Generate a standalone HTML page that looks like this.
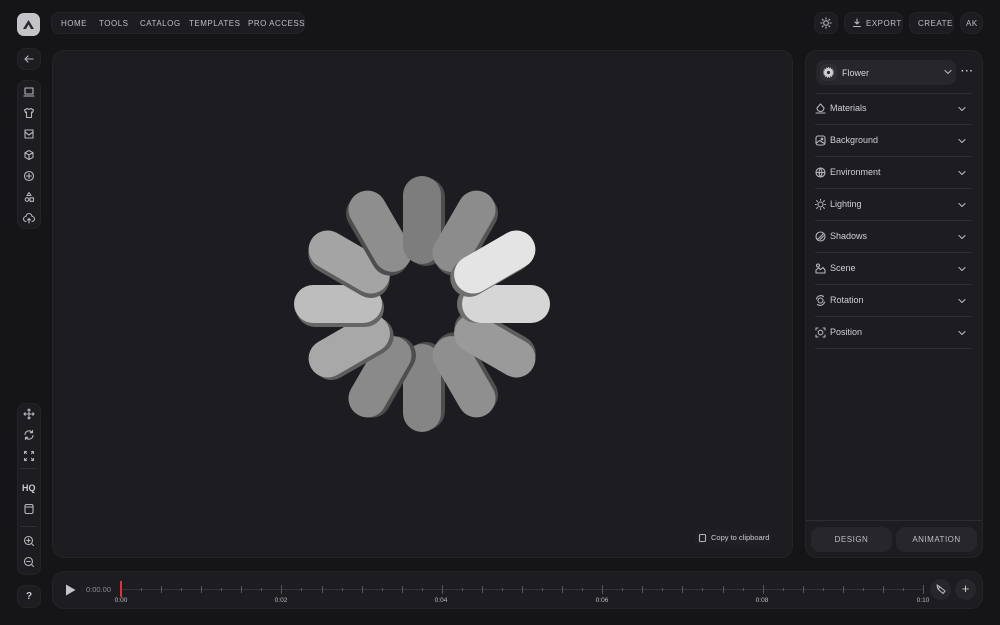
<!DOCTYPE html>
<html><head><meta charset="utf-8"><style>
*{margin:0;padding:0;box-sizing:border-box}
body{width:1000px;height:625px;background:#151518;font-family:"Liberation Sans",sans-serif;color:#c9c9ce;position:relative;overflow:hidden}
.a{position:absolute}
.box{background:#1d1d21;border:1px solid #232328}
.nav{font-size:8px;letter-spacing:.5px;color:#bfbfc4;white-space:nowrap}
.ic{position:absolute;left:22px;width:14px;height:14px}
svg.s{stroke:#b5b5ba;fill:none;stroke-width:1.1;stroke-linecap:round;stroke-linejoin:round}
.row{position:absolute;left:815px;width:157px;height:32px;border-bottom:1px solid #2c2c31;font-size:9px;color:#cfcfd4}
.row span{position:absolute;left:15px;top:10px}
.row svg{position:absolute}
.row .ch{right:6px;top:13px}
.tk{position:absolute;width:1px;background:#55555b}
.tl{position:absolute;top:597px;font-size:6.5px;color:#bbb;transform:translateX(-50%)}
</style></head><body>
<div class="a" style="left:17px;top:13px;width:23px;height:23px;border-radius:7px;background:#c4c4c8"></div>
<svg class="a" style="left:21px;top:17px" width="15" height="15" viewBox="0 0 15 15"><path d="M2 12 L7.5 3 L13 12 L10 12 L7.5 7.5 L5 12Z" fill="#2a2a2e"/></svg>
<div class="a box nav" style="left:51px;top:12px;width:254px;height:22px;border-radius:8px;">
<span class="a" style="left:9px;top:6px">HOME</span><span class="a" style="left:47px;top:6px">TOOLS</span><span class="a" style="left:88px;top:6px">CATALOG</span><span class="a" style="left:137px;top:6px">TEMPLATES</span><span class="a" style="left:196px;top:6px">PRO ACCESS</span></div>
<div class="a box" style="left:814px;top:12px;width:24px;height:22px;border-radius:8px"></div>
<svg class="a s" style="left:820px;top:17px" width="12" height="12" viewBox="0 0 12 12"><circle cx="6" cy="6" r="2.3"/><path d="M6 .8v1.3M6 9.9v1.3M.8 6h1.3M9.9 6h1.3M2.3 2.3l.9.9M8.8 8.8l.9.9M2.3 9.7l.9-.9M8.8 3.2l.9-.9"/></svg>
<div class="a box nav" style="left:844px;top:12px;width:59px;height:22px;border-radius:8px"><svg class="a s" style="left:7px;top:5px" width="10" height="10" viewBox="0 0 10 10"><path d="M5 1v5M3 4l2 2 2-2M1.5 8.5h7"/></svg><span class="a" style="left:21px;top:6px">EXPORT</span></div>
<div class="a box nav" style="left:909px;top:12px;width:45px;height:22px;border-radius:8px"><span class="a" style="left:8px;top:6px">CREATE</span></div>
<div class="a box nav" style="left:960px;top:12px;width:23px;height:22px;border-radius:10px"><span class="a" style="left:5px;top:6px">AK</span></div>
<div class="a box" style="left:17px;top:48px;width:24px;height:22px;border-radius:8px"></div>
<svg class="a s" style="left:23px;top:53px" width="12" height="12" viewBox="0 0 12 12"><path d="M10 6H2M5 3L2 6l3 3"/></svg>
<div class="a box" style="left:17px;top:80px;width:24px;height:149px;border-radius:8px"></div>
<svg class="ic s" style="top:85px" viewBox="0 0 14 14"><rect x="3" y="3" width="8" height="6"/><path d="M2 11h10"/></svg>
<svg class="ic s" style="top:106px" viewBox="0 0 14 14"><path d="M5 2.5L2.5 4 3.5 6.5 4.5 6V11.5h5V6l1 .5 1-2.5L9 2.5Q7 4 5 2.5Z"/></svg>
<svg class="ic s" style="top:127px" viewBox="0 0 14 14"><rect x="3" y="3" width="8" height="8"/><path d="M3 5l4 3 4-3"/></svg>
<svg class="ic s" style="top:148px" viewBox="0 0 14 14"><path d="M7 2.5l4 2.2v4.6L7 11.5 3 9.3V4.7ZM3 4.7l4 2.3 4-2.3M7 7v4.5"/></svg>
<svg class="ic s" style="top:169px" viewBox="0 0 14 14"><circle cx="7" cy="7" r="4.5"/><path d="M7 4.5v5M4.5 7h5"/></svg>
<svg class="ic s" style="top:190px" viewBox="0 0 14 14"><path d="M7 2.5l2 3H5Z"/><circle cx="5" cy="9.5" r="1.8"/><rect x="8" y="7.8" width="3.5" height="3.5"/></svg>
<svg class="ic s" style="top:211px" viewBox="0 0 14 14"><path d="M4 10.5a2.5 2.5 0 0 1 0-5 3 3 0 0 1 6 0 2.5 2.5 0 0 1 0 5M7 12V7.5M5.5 9L7 7.5 8.5 9"/></svg>
<div class="a box" style="left:17px;top:403px;width:24px;height:172px;border-radius:8px"></div>
<svg class="ic s" style="top:407px" viewBox="0 0 14 14"><path d="M7 2v10M2 7h10M5.8 3.2L7 2l1.2 1.2M5.8 10.8L7 12l1.2-1.2M3.2 5.8L2 7l1.2 1.2M10.8 5.8L12 7l-1.2 1.2"/></svg>
<svg class="ic s" style="top:428px" viewBox="0 0 14 14"><path d="M3 6.5a4 4 0 0 1 7.2-2M11 7.5a4 4 0 0 1-7.2 2M10.5 2.5v2.2H8.3M3.5 11.5V9.3h2.2"/></svg>
<svg class="ic s" style="top:449px" viewBox="0 0 14 14"><path d="M2.5 4.5v-2h2M9.5 2.5h2v2M11.5 9.5v2h-2M4.5 11.5h-2v-2M2.5 2.5l2 2M11.5 2.5l-2 2M11.5 11.5l-2-2M2.5 11.5l2-2"/></svg>
<div class="a" style="left:21px;top:468px;width:16px;height:1px;background:#2e2e33"></div>
<div class="a" style="left:22px;top:483px;font-size:9px;font-weight:bold;color:#c9c9ce">HQ</div>
<svg class="ic s" style="top:502px" viewBox="0 0 14 14"><rect x="3" y="2.5" width="8" height="9" rx="1.5"/><path d="M3 5h8"/></svg>
<div class="a" style="left:21px;top:526px;width:16px;height:1px;background:#2e2e33"></div>
<svg class="ic s" style="top:534px" viewBox="0 0 14 14"><circle cx="6.5" cy="6.5" r="4"/><path d="M9.5 9.5l2 2M6.5 4.8v3.4M4.8 6.5h3.4"/></svg>
<svg class="ic s" style="top:555px" viewBox="0 0 14 14"><circle cx="6.5" cy="6.5" r="4"/><path d="M9.5 9.5l2 2M4.8 6.5h3.4"/></svg>
<div class="a box" style="left:17px;top:585px;width:24px;height:23px;border-radius:8px;font-size:10px;font-weight:bold;text-align:center;line-height:21px">?</div>
<div class="a box" style="left:52px;top:50px;width:741px;height:508px;border-radius:12px;background:#1d1d21"></div>
<div class="a" style="left:694px;top:530px;width:78px;height:15px;border-radius:6px;background:#202024;font-size:7.5px;color:#c9c9ce"><svg class="a s" style="left:4px;top:3px" width="9" height="9" viewBox="0 0 9 9"><rect x="1.5" y="1.5" width="6" height="7" rx="1"/></svg><span class="a" style="left:17px;top:3px">Copy to clipboard</span></div>
<svg class="a" style="left:272px;top:154px" width="300" height="300" viewBox="-150 -150 300 300">
<g transform="rotate(180)"><rect x="-19" y="-128" width="38" height="88" rx="19" fill="#4e4e4e" transform="translate(-4,2)"/><rect x="-19" y="-128" width="38" height="88" rx="19" fill="#858585"/></g>
<g transform="rotate(210)"><rect x="-19" y="-128" width="38" height="88" rx="19" fill="#4e4e4e" transform="translate(-4,2)"/><rect x="-19" y="-128" width="38" height="88" rx="19" fill="#8a8a8a"/></g>
<g transform="rotate(150)"><rect x="-19" y="-128" width="38" height="88" rx="19" fill="#4e4e4e" transform="translate(-4,2)"/><rect x="-19" y="-128" width="38" height="88" rx="19" fill="#8f8f8f"/></g>
<g transform="rotate(240)"><rect x="-19" y="-128" width="38" height="88" rx="19" fill="#5e5e5e" transform="translate(-4,2)"/><rect x="-19" y="-128" width="38" height="88" rx="19" fill="#a8a8a8"/></g>
<g transform="rotate(120)"><rect x="-19" y="-128" width="38" height="88" rx="19" fill="#5e5e5e" transform="translate(-4,2)"/><rect x="-19" y="-128" width="38" height="88" rx="19" fill="#9a9a9a"/></g>
<g transform="rotate(270)"><rect x="-19" y="-128" width="38" height="88" rx="19" fill="#666" transform="translate(-4,2)"/><rect x="-19" y="-128" width="38" height="88" rx="19" fill="#bdbdbd"/></g>
<g transform="rotate(300)"><rect x="-19" y="-128" width="38" height="88" rx="19" fill="#5e5e5e" transform="translate(-4,2)"/><rect x="-19" y="-128" width="38" height="88" rx="19" fill="#a4a4a4"/></g>
<g transform="rotate(330)"><rect x="-19" y="-128" width="38" height="88" rx="19" fill="#4e4e4e" transform="translate(-4,2)"/><rect x="-19" y="-128" width="38" height="88" rx="19" fill="#8e8e8e"/></g>
<g transform="rotate(0)"><rect x="-19" y="-128" width="38" height="88" rx="19" fill="#4e4e4e" transform="translate(4,2)"/><rect x="-19" y="-128" width="38" height="88" rx="19" fill="#7d7d7d"/></g>
<g transform="rotate(30)"><rect x="-19" y="-128" width="38" height="88" rx="19" fill="#555" transform="translate(4,2)"/><rect x="-19" y="-128" width="38" height="88" rx="19" fill="#8c8c8c"/></g>
<g transform="rotate(90)"><rect x="-19" y="-128" width="38" height="88" rx="19" fill="#707070" transform="translate(0,5)"/><rect x="-19" y="-128" width="38" height="88" rx="19" fill="#d6d6d6"/></g>
<g transform="rotate(60)"><rect x="-19" y="-128" width="38" height="88" rx="19" fill="#707070" transform="translate(1,5)"/><rect x="-19" y="-128" width="38" height="88" rx="19" fill="#e4e4e4"/></g>
</svg>
<div class="a box" style="left:805px;top:50px;width:178px;height:508px;border-radius:12px"></div>
<div class="a" style="left:816px;top:60px;width:140px;height:25px;border-radius:8px;background:#26262b"></div>
<div class="a" style="left:820px;top:64px;width:17px;height:17px;border-radius:5px;background:#2e2e33"></div>
<svg class="a" style="left:823px;top:67px" width="11" height="11" viewBox="0 0 11 11"><circle cx="5.5" cy="5.5" r="4.5" fill="#d0d0d0"/><circle cx="5.5" cy="5.5" r="4.8" fill="none" stroke="#d0d0d0" stroke-width="1.2" stroke-dasharray="1 1"/><circle cx="5.5" cy="5.5" r="1.6" fill="#2e2e33"/></svg>
<div class="a" style="left:842px;top:68px;font-size:9px;color:#d4d4d8">Flower</div>
<svg class="a s" style="left:944px;top:69px" width="8" height="6" viewBox="0 0 8 6"><path d="M1 1.5l3 3 3-3"/></svg>
<div class="a" style="left:961px;top:66px;font-size:10px;font-weight:bold;letter-spacing:1px;color:#ccc">···</div>
<div class="a" style="left:815px;top:93px;width:157px;height:1px;background:#2c2c31"></div>
<div class="row" style="top:93px"><svg class="s" style="left:0;top:10px" width="11" height="11" viewBox="0 0 11 11"><path d="M5.5 1L9 5a3.5 3.5 0 0 1-7 0ZM1 10h9"/></svg><span>Materials</span><svg class="s ch" width="8" height="6" viewBox="0 0 8 6"><path d="M1 1.5l3 3 3-3"/></svg></div>
<div class="row" style="top:125px"><svg class="s" style="left:0;top:10px" width="11" height="11" viewBox="0 0 11 11"><rect x="1" y="1" width="9" height="9" rx="2"/><path d="M1.5 8l3-2.5 5 3"/><circle cx="7" cy="4" r=".8"/></svg><span>Background</span><svg class="s ch" width="8" height="6" viewBox="0 0 8 6"><path d="M1 1.5l3 3 3-3"/></svg></div>
<div class="row" style="top:157px"><svg class="s" style="left:0;top:10px" width="11" height="11" viewBox="0 0 11 11"><circle cx="5.5" cy="5.5" r="4.5"/><path d="M1 5.5h9M5.5 1c-2 3-2 6 0 9M5.5 1c2 3 2 6 0 9"/></svg><span>Environment</span><svg class="s ch" width="8" height="6" viewBox="0 0 8 6"><path d="M1 1.5l3 3 3-3"/></svg></div>
<div class="row" style="top:189px"><svg class="s" style="left:0;top:10px" width="11" height="11" viewBox="0 0 11 11"><circle cx="5.5" cy="5.5" r="2.5"/><path d="M5.5 0v1.3M5.5 9.7V11M0 5.5h1.3M9.7 5.5H11M1.6 1.6l.9.9M8.5 8.5l.9.9M1.6 9.4l.9-.9M8.5 2.5l.9-.9"/></svg><span>Lighting</span><svg class="s ch" width="8" height="6" viewBox="0 0 8 6"><path d="M1 1.5l3 3 3-3"/></svg></div>
<div class="row" style="top:221px"><svg class="s" style="left:0;top:10px" width="11" height="11" viewBox="0 0 11 11"><circle cx="5.5" cy="5.5" r="4.5"/><path d="M3 8l5-5M5 8.5l3.5-3.5"/></svg><span>Shadows</span><svg class="s ch" width="8" height="6" viewBox="0 0 8 6"><path d="M1 1.5l3 3 3-3"/></svg></div>
<div class="row" style="top:253px"><svg class="s" style="left:0;top:10px" width="11" height="11" viewBox="0 0 11 11"><circle cx="3" cy="2.5" r="1.5"/><path d="M1 10V7l2.5-2 2 1.5L8 4.5 10 7v3Z"/></svg><span>Scene</span><svg class="s ch" width="8" height="6" viewBox="0 0 8 6"><path d="M1 1.5l3 3 3-3"/></svg></div>
<div class="row" style="top:285px"><svg class="s" style="left:0;top:10px" width="11" height="11" viewBox="0 0 11 11"><circle cx="5.5" cy="5.5" r="2.5"/><path d="M1.5 4a4.5 4.5 0 0 1 7-2.5M9.5 7a4.5 4.5 0 0 1-7 2.5"/></svg><span>Rotation</span><svg class="s ch" width="8" height="6" viewBox="0 0 8 6"><path d="M1 1.5l3 3 3-3"/></svg></div>
<div class="row" style="top:317px"><svg class="s" style="left:0;top:10px" width="11" height="11" viewBox="0 0 11 11"><circle cx="5.5" cy="5.5" r="2.3"/><path d="M1 3V1h2M8 1h2v2M10 8v2H8M3 10H1V8"/></svg><span>Position</span><svg class="s ch" width="8" height="6" viewBox="0 0 8 6"><path d="M1 1.5l3 3 3-3"/></svg></div>
<div class="a" style="left:806px;top:520px;width:176px;height:1px;background:#2c2c31"></div>
<div class="a nav" style="left:811px;top:527px;width:81px;height:25px;border-radius:9px;background:#26262b;text-align:center;line-height:25px">DESIGN</div>
<div class="a nav" style="left:896px;top:527px;width:81px;height:25px;border-radius:9px;background:#26262b;text-align:center;line-height:25px">ANIMATION</div>
<div class="a box" style="left:52px;top:571px;width:931px;height:38px;border-radius:12px"></div>
<svg class="a" style="left:65px;top:584px" width="11" height="12" viewBox="0 0 11 12"><path d="M1 0.5L10.5 6 1 11.5Z" fill="#c4c4c8"/></svg>
<div class="a" style="left:86px;top:585px;font-size:7.5px;color:#8a8a90">0:00.00</div>
<div class="a" style="left:121px;top:589px;width:802px;height:1px;background:#323237"></div>
<div id="ticks"></div>
<div class="a" style="left:120px;top:581px;width:2px;height:16px;background:#e0323a"></div>
<div class="tl" style="left:121px">0:00</div><div class="tl" style="left:281px">0:02</div><div class="tl" style="left:441px">0:04</div><div class="tl" style="left:602px">0:06</div><div class="tl" style="left:762px">0:08</div><div class="tl" style="left:923px">0:10</div>
<div class="a" style="left:930px;top:579px;width:21px;height:21px;border-radius:50%;background:#26262b"></div>
<svg class="a s" style="left:935px;top:584px" width="11" height="11" viewBox="0 0 11 11"><path d="M2 1l1 4 5 4.5 2-2.5L5 3Z M3 5l2-2"/></svg>
<div class="a" style="left:955px;top:579px;width:21px;height:21px;border-radius:50%;background:#26262b;text-align:center;line-height:20px;font-size:13px;color:#ccc">+</div>
<script>
var h='';for(var i=1;i<=40;i++){var x=121+i*20.05;var maj=i%8==0,mid=i%2==0;var hh=maj?9:(mid?7:3);h+='<div class="tk" style="left:'+Math.round(x)+'px;top:'+(589-hh/2)+'px;height:'+hh+'px"></div>';}
document.getElementById('ticks').innerHTML=h;
</script>
</body></html>
